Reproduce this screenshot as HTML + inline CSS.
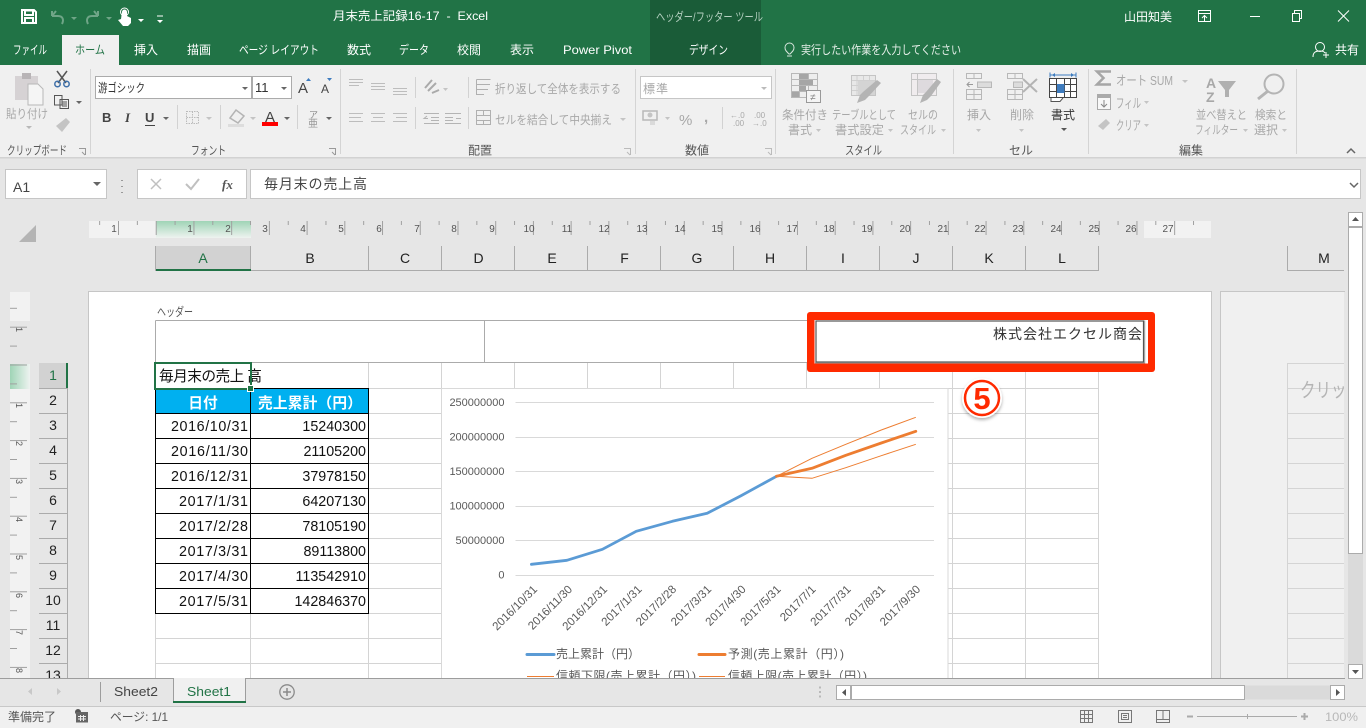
<!DOCTYPE html>
<html lang="ja"><head><meta charset="utf-8"><title>月末売上記録16-17 - Excel</title>
<style>
html,body{margin:0;padding:0;background:#e6e6e6;overflow:hidden}
svg{display:block}
text{font-family:"Liberation Sans","Noto Sans CJK JP",sans-serif;white-space:pre}
.w{fill:#fff;font-size:12px}
.g{fill:#a8a8a8;font-size:12px}
.d{fill:#444;font-size:12px}
.h{fill:#222;font-size:14px;text-anchor:middle}
.c{fill:#111;font-size:14.3px;text-anchor:end}
.r{fill:#555;font-size:10px;text-anchor:middle}
.y{fill:#595959;font-size:11px;text-anchor:end}
.x{fill:#595959;font-size:11.6px;text-anchor:end}
.l{fill:#595959;font-size:12px}
</style></head><body>
<svg width="1366" height="728" viewBox="0 0 1366 728" xmlns="http://www.w3.org/2000/svg">
<defs>
<pattern id="hr" x="118" y="221" width="37.72" height="17" patternUnits="userSpaceOnUse"><path d="M.5 0V14M19.36 0V4" stroke="#a0a0a0" fill="none"/></pattern>
<pattern id="vr" x="10" y="326.7" width="20" height="37.8" patternUnits="userSpaceOnUse"><path d="M0 .5H17M0 19.4H7" stroke="#a0a0a0" fill="none"/></pattern>
<linearGradient id="gh" x1="0" y1="0" x2="0" y2="1"><stop offset="0" stop-color="#9fd4b6"/><stop offset="1" stop-color="#eef3f0"/></linearGradient>
<linearGradient id="gv" x1="0" y1="0" x2="1" y2="0"><stop offset="0" stop-color="#9fd4b6"/><stop offset="1" stop-color="#eef3f0"/></linearGradient>
<filter id="sh" x="-30%" y="-30%" width="160%" height="160%"><feDropShadow dx="0" dy="2" stdDeviation="1.5" flood-color="#000" flood-opacity=".3"/></filter>
<clipPath id="cl"><rect x="0" y="200" width="1345" height="478"/></clipPath>
</defs>

<rect width="1366" height="728" fill="#e6e6e6"/>
<!-- title bar -->
<rect width="1366" height="65" fill="#217346"/>
<rect x="650" width="111" height="65" fill="#1a5c38"/>
<rect x="62" y="35" width="57" height="30" fill="#f0f0f0"/>
<!-- QAT -->
<path d="M22 10H34L36 12V23H22ZM25 10.5V15H33V10.5ZM25 23V18H33V23" fill="none" stroke="#fff" stroke-width="2"/>
<path d="M52 16L56 11M52 16H58C63 16 64 20 62 24M52 11V16" fill="none" stroke="#6fa587" stroke-width="2"/>
<path d="M72 19l3 3 3-3z M107 19l3 3 3-3z" fill="#6fa587" transform="translate(-1 -2)"/>
<path d="M98 16L94 11M98 16H92C87 16 86 20 88 24M98 11V16" fill="none" stroke="#6fa587" stroke-width="2"/>
<path d="M122 12a2.5 2.5 0 0 1 5 0V16L131 18V23L128 26H123L118 20L121 19Z" fill="#fff"/><circle cx="124.5" cy="12" r="4" fill="none" stroke="#fff"/>
<path d="M138 19h6l-3 3zM157 20h6l-3 3z" fill="#fff"/><path d="M157 16h6" stroke="#fff"/>
<text x="333" y="20" class="w" textLength="155" lengthAdjust="spacingAndGlyphs">月末売上記録16-17  -  Excel</text>
<text x="656" y="21" class="w" style="fill:#b4d0c0" textLength="107" lengthAdjust="spacingAndGlyphs">ヘッダー/フッター ツール</text>
<text x="1124" y="21" class="w" textLength="48" lengthAdjust="spacingAndGlyphs">山田知美</text>
<path d="M1198.5 10.5H1210.5V21.5H1198.5ZM1198.5 13.5H1210.5M1202 18L1204.5 15.5L1207 18M1204.5 16V21" fill="none" stroke="#fff"/>
<path d="M1250 16.5H1260" stroke="#fff"/>
<path d="M1292.5 13.5H1299.5V21.5H1292.5ZM1294.5 13V10.5H1301.5V18.5H1300" fill="none" stroke="#fff"/>
<path d="M1338 10.5L1349 21.5M1349 10.5L1338 21.5" stroke="#fff" fill="none"/>
<!-- tabs -->
<text x="13" y="54" class="w" textLength="34" lengthAdjust="spacingAndGlyphs">ファイル</text>
<text x="75" y="54" class="w" style="fill:#217346" textLength="30" lengthAdjust="spacingAndGlyphs">ホーム</text>
<text x="134" y="54" class="w" textLength="24">挿入</text>
<text x="187" y="54" class="w" textLength="24">描画</text>
<text x="239" y="54" class="w" textLength="80" lengthAdjust="spacingAndGlyphs">ページ レイアウト</text>
<text x="347" y="54" class="w" textLength="24">数式</text>
<text x="399" y="54" class="w" textLength="30" lengthAdjust="spacingAndGlyphs">データ</text>
<text x="457" y="54" class="w" textLength="24">校閲</text>
<text x="510" y="54" class="w" textLength="24">表示</text>
<text x="563" y="54" class="w" textLength="69" lengthAdjust="spacingAndGlyphs">Power Pivot</text>
<text x="689" y="54" class="w" textLength="39" lengthAdjust="spacingAndGlyphs">デザイン</text>
<path d="M789 54c-3-3-4-4-4-6.500a4.500 4.500 0 0 1 9 0c0 2.500-1 3.500-4 6.500zM787 56h5" fill="none" stroke="#d8e6dd"/>
<text x="801" y="54" class="w" style="fill:#e6efe9" textLength="160" lengthAdjust="spacingAndGlyphs">実行したい作業を入力してください</text>
<circle cx="1320" cy="47" r="4.500" fill="none" stroke="#fff"/><path d="M1313 57c0-5 3-6 7-6s4 1 5 2M1323 55h6M1326 52v6" fill="none" stroke="#fff"/>
<text x="1335" y="54" class="w" textLength="24">共有</text>

<!-- ribbon -->
<rect y="65" width="1366" height="93" fill="#f0f0f0"/>
<rect y="157" width="1366" height="1.500" fill="#d2d2d2"/>
<path d="M90.500 69V154M340.500 69V154M635.500 69V154M775.500 69V154M953.500 69V154M1088.500 69V154M1296.500 69V154" stroke="#d4d4d4"/>
<!-- clipboard -->
<path d="M15 76H38V100H15Z" fill="#d6d2d4"/><path d="M22 73H31V79H22Z" fill="#b8b4b6"/>
<path d="M28 84H38L43 89V105H28Z" fill="#f5f5f5" stroke="#b8b8b8"/>
<text x="6" y="118" class="g" textLength="42" lengthAdjust="spacingAndGlyphs">貼り付け</text>
<path d="M26 126h6l-3 3z" fill="#b8b8b8"/>
<path d="M57 71L66 83M67 71L58 83" stroke="#555" stroke-width="1.500"/><circle cx="57.500" cy="84" r="2.700" fill="none" stroke="#3e6fa8" stroke-width="1.500"/><circle cx="66.500" cy="84" r="2.700" fill="none" stroke="#3e6fa8" stroke-width="1.500"/>
<path d="M54.500 95.500H62V105H54.500ZM60 99.500H68.500V108.500H60ZM62 102H67M62 104H67M62 106H67" fill="#f0f0f0" stroke="#555"/>
<path d="M76 101h6l-3 3z" fill="#666"/>
<path d="M56 126L66 118L70 122L62 132Z" fill="#c4c4c4"/>
<text x="7" y="154.500" class="d" style="fill:#555" textLength="60" lengthAdjust="spacingAndGlyphs">クリップボード</text>
<path d="M79 148.500H85.500V155M82 152l3 3" fill="none" stroke="#999"/>
<!-- font -->
<rect x="95.500" y="76.500" width="156" height="22" fill="#fff" stroke="#ababab"/>
<rect x="252.500" y="76.500" width="39" height="22" fill="#fff" stroke="#ababab"/>
<text x="98" y="92" class="d" style="fill:#333" textLength="47" lengthAdjust="spacingAndGlyphs">游ゴシック</text>
<text x="255" y="92" class="d" style="fill:#333;font-size:13px">11</text>
<path d="M242 87h6l-3 3zM281 87h6l-3 3z" fill="#666"/>
<text x="298" y="93" class="d" style="font-size:15px">A</text><path d="M306 81l2.500-3 2.500 3z" fill="#3e7cbf"/>
<text x="321" y="93" class="d" style="font-size:12px">A</text><path d="M327 78l2.500 3 2.500-3z" fill="#3e7cbf"/>
<text x="102" y="122" class="d" style="font-size:13px;font-weight:bold">B</text>
<text x="125" y="122" class="d" style="font-size:13px;font-style:italic;font-family:'Liberation Serif',serif;font-weight:bold">I</text>
<text x="145" y="122" class="d" style="font-size:13px;font-weight:bold">U</text><path d="M145 125.500h10" stroke="#444"/>
<path d="M163 117h6l-3 3z" fill="#666"/>
<path d="M177.500 105V129M220.500 105V129M297.500 105V129" stroke="#d2d2d2"/>
<path d="M186.500 111.500H198.500V123.500H186.500ZM192.500 111.500V123.500M186.500 117.500H198.500" fill="none" stroke="#bbb" stroke-dasharray="1.500 1"/>
<path d="M206 117h6l-3 3z" fill="#c4c4c4"/>
<path d="M230 118L236 110L244 116L238 123Z" fill="none" stroke="#b4b4b4" stroke-width="1.500"/><rect x="228" y="124" width="16" height="3" fill="#ddd"/>
<path d="M250 117h6l-3 3z" fill="#c4c4c4"/>
<text x="265" y="122" class="d" style="font-size:15px">A</text><rect x="262" y="122" width="16" height="4" fill="#f00"/>
<path d="M284 117h6l-3 3z" fill="#666"/>
<text x="309" y="118" class="g" style="font-size:9px;fill:#888">ア</text><text x="308" y="127" class="g" style="font-size:10px;fill:#999">亜</text>
<path d="M326 117h6l-3 3z" fill="#666"/>
<text x="191" y="154.500" class="d" style="fill:#555" textLength="35" lengthAdjust="spacingAndGlyphs">フォント</text>
<path d="M329 148.500H335.500V155M332 152l3 3" fill="none" stroke="#999"/>
<!-- alignment -->
<path d="M349 79.500H363M349 82.500H363M349 85.500H359 M371 83.500H385M371 86.500H385M371 89.500H385 M393 88.500H407M393 91.500H407M393 94.500H407 M349 113.500H363M349 117.500H361M349 121.500H363 M371 113.500H385M373 117.500H383M371 121.500H385 M393 113.500H407M396 117.500H407M393 121.500H407" stroke="#bdbdbd" fill="none"/>
<path d="M415.500 77V98M415.500 107V129M468.500 77V98M468.500 107V129" stroke="#d2d2d2"/>
<path d="M425 88L432 80M428 91L436 83M432 93l7-3" stroke="#aaa" stroke-width="2" fill="none"/><path d="M443 88h5l-2.500 3z" fill="#c4c4c4"/>
<path d="M424 113.500H439M431 117.500H439M431 120.500H439M424 123.500H439M428 118.500L424 118.500L427 116M445 113.500H461M445 117.500H453M445 120.500H453M445 123.500H461M456 118.500h5" stroke="#b4b4b4" fill="none"/>
<path d="M476.500 79.500H490.500M476.500 79.500V94.500H484M476.500 84.500H490M476.500 89.500H488" stroke="#b0b0b0" fill="none"/>
<text x="495" y="93" class="g" textLength="126" lengthAdjust="spacingAndGlyphs">折り返して全体を表示する</text>
<path d="M476.500 110.500H490.500V124.500H476.500ZM476.500 115.500H490.500M476.500 120.500H490.500M483.500 110.500V115.500M483.500 120.500V124.500" stroke="#b0b0b0" fill="none"/>
<text x="495" y="124" class="g" textLength="117" lengthAdjust="spacingAndGlyphs">セルを結合して中央揃え</text>
<path d="M620 118h6l-3 3z" fill="#c4c4c4"/>
<text x="468" y="154.500" class="d" style="fill:#555" textLength="24">配置</text>
<path d="M624 148.500H630.500V155M627 152l3 3" fill="none" stroke="#bbb"/>
<!-- number -->
<rect x="640.500" y="76.500" width="131" height="22" fill="#fff" stroke="#c6c6c6"/>
<text x="643" y="93" class="g" textLength="25">標準</text>
<path d="M761 87h6l-3 3z" fill="#bbb"/>
<path d="M643 111H657V120H643Z" fill="none" stroke="#b8b8b8" stroke-width="1.500"/><circle cx="650" cy="115" r="2.500" fill="#c4c4c4"/><path d="M650 122h5M650 124h5" stroke="#c4c4c4"/>
<path d="M665 117h5l-2.500 3z" fill="#c4c4c4"/>
<text x="679" y="125" class="g" style="font-size:15px">%</text>
<text x="704" y="122" class="g" style="font-size:15px;font-weight:bold">,</text>
<path d="M722.500 107V129" stroke="#d2d2d2"/>
<text x="730" y="118" class="g" style="font-size:8px">←.0</text><text x="733" y="126" class="g" style="font-size:8px">.00</text>
<text x="754" y="118" class="g" style="font-size:8px">.00</text><text x="752" y="126" class="g" style="font-size:8px">→.0</text>
<text x="685" y="154.500" class="d" style="fill:#555" textLength="24">数値</text>
<path d="M765 148.500H771.500V155M768 152l3 3" fill="none" stroke="#bbb"/>
<!-- styles -->
<path d="M791.500 73.500H817.500V97.500H791.500ZM791.500 79.500H817.500M791.500 85.500H817.500M791.500 91.500H817.500M799.500 73.500V97.500M808.500 73.500V97.500" fill="#eee" stroke="#b8b8b8"/>
<path d="M799 74H808V79H799ZM799 80H813V85H799ZM799 86H806V91H799ZM792 92H799V97H792Z" fill="#a6a6a6"/>
<rect x="806.500" y="90.500" width="14" height="12" fill="#f5f5f5" stroke="#999"/><text x="810" y="100.500" class="g" style="font-size:10px;fill:#888">≠</text>
<text x="782" y="119" class="g" textLength="46" lengthAdjust="spacingAndGlyphs">条件付き</text>
<text x="788" y="134" class="g" textLength="24">書式</text><path d="M816 129h5l-2.500 3z" fill="#c4c4c4"/>
<path d="M851.500 75.500H875.500V95.500H851.500Z" fill="#e8e8e8" stroke="#c4c4c4"/><path d="M857 76V95M863.500 76V95M869.500 76V95M852 80.500H875M852 85.500H875M852 90.500H875" stroke="#d0d0d0"/><rect x="858" y="81" width="17" height="14" fill="#d4d4d4"/>
<path d="M857 103L860 95L863 92L877 80L881 83L868 97L865 100Z" fill="#b4b4b4"/>
<text x="832" y="119" class="g" textLength="64" lengthAdjust="spacingAndGlyphs">テーブルとして</text>
<text x="835" y="134" class="g" textLength="49" lengthAdjust="spacingAndGlyphs">書式設定</text><path d="M888 129h5l-2.500 3z" fill="#c4c4c4"/>
<path d="M911.500 73.500H936.500V95.500H911.500ZM911.500 79.500H936.500M917.500 74V95" fill="#f0ecee" stroke="#c4c4c4"/><rect x="918" y="80" width="15" height="13" fill="#dedade"/>
<path d="M920 103L923 95L926 92L937 79L941 82L931 96L927 100Z" fill="#b4b4b4"/>
<text x="908" y="119" class="g" textLength="30" lengthAdjust="spacingAndGlyphs">セルの</text>
<text x="900" y="134" class="g" textLength="36" lengthAdjust="spacingAndGlyphs">スタイル</text><path d="M941 129h5l-2.500 3z" fill="#c4c4c4"/>
<text x="845" y="154.500" class="d" style="fill:#555" textLength="37" lengthAdjust="spacingAndGlyphs">スタイル</text>
<!-- cells -->
<path d="M966.500 73.500H981.500V78.500H966.500ZM974 73.500V78.500M966.500 89.500H981.500V99.500H966.500ZM966.500 94.500H981.500M974 89.500V99.500" fill="none" stroke="#b8b8b8"/><rect x="977.500" y="82" width="14" height="5.500" fill="#dcdcdc" stroke="#b8b8b8"/>
<path d="M973 84.500H967M969.500 82L967 84.500L969.500 87" fill="none" stroke="#999"/>
<text x="967" y="119" class="g" textLength="24">挿入</text><path d="M976 129h5l-2.500 3z" fill="#c4c4c4"/>
<path d="M1007.500 73.500H1022.500V78.500H1007.500ZM1015 73.500V78.500M1007.500 89.500H1022.500V99.500H1007.500ZM1007.500 94.500H1022.500M1015 89.500V99.500" fill="none" stroke="#b8b8b8"/><rect x="1013.500" y="82" width="9" height="5.500" fill="#dcdcdc" stroke="#b8b8b8"/>
<path d="M1023 79L1037 92M1037 79L1023 92" stroke="#b4b4b4" stroke-width="2"/>
<text x="1010" y="119" class="g" textLength="24">削除</text><path d="M1019 129h5l-2.500 3z" fill="#c4c4c4"/>
<path d="M1050 75H1076M1050 72.500V77.500M1076 72.500V77.500" stroke="#3e7cbf" fill="none"/><path d="M1052 75l3-2v4zM1074 75l-3-2v4z" fill="#3e7cbf"/>
<path d="M1049.500 78.500H1076.500V97.500H1049.500ZM1049.500 84.500H1076.500M1049.500 91.500H1076.500M1056.500 78.500V97.500M1064.500 78.500V97.500M1070.500 78.500V97.500" fill="#fff" stroke="#444"/>
<path d="M1051 98L1051 101.500H1060L1063 98" fill="#fff" stroke="#555"/>
<rect x="1057" y="84" width="7.500" height="9" fill="#3e7cbf"/>
<text x="1051" y="119" class="d" style="fill:#333" textLength="24">書式</text><path d="M1061 128h6l-3 3z" fill="#555"/>
<text x="1009" y="154.500" class="d" style="fill:#555" textLength="24">セル</text>
<!-- editing -->
<path d="M1111 71.500H1097L1103.500 78L1097 84.500H1111" fill="none" stroke="#a6a6a6" stroke-width="2.500"/>
<text x="1116" y="85" class="g" style="font-size:13px" textLength="57" lengthAdjust="spacingAndGlyphs">オート SUM</text><path d="M1182 80h6l-3 3z" fill="#c4c4c4"/>
<rect x="1097.500" y="94.500" width="13" height="15" fill="#f8f8f8" stroke="#aaa"/><rect x="1097" y="94" width="14" height="4" fill="#aaa"/><path d="M1104 100V107M1101 104L1104 107L1107 104" stroke="#888" fill="none"/>
<text x="1116" y="108" class="g" style="font-size:13px" textLength="25" lengthAdjust="spacingAndGlyphs">フィル</text><path d="M1144 101h5l-2.500 3z" fill="#c4c4c4"/>
<path d="M1098 126L1106 119L1110 123L1103 130Z" fill="#c4c4c4"/>
<text x="1116" y="130" class="g" style="font-size:13px" textLength="25" lengthAdjust="spacingAndGlyphs">クリア</text><path d="M1144 124h5l-2.500 3z" fill="#c4c4c4"/>
<text x="1206" y="88" class="g" style="font-size:14px;font-weight:bold">A</text><text x="1206" y="102" class="g" style="font-size:14px;font-weight:bold">Z</text>
<path d="M1218 81H1236L1229 90V97H1225V90Z" fill="#b0b0b0"/>
<circle cx="1274" cy="84" r="9.500" fill="none" stroke="#b4b4b4" stroke-width="2"/><path d="M1268 91L1258 99" stroke="#b4b4b4" stroke-width="3"/>
<text x="1196" y="119" class="g" textLength="51" lengthAdjust="spacingAndGlyphs">並べ替えと</text>
<text x="1195" y="134" class="g" textLength="43" lengthAdjust="spacingAndGlyphs">フィルター</text><path d="M1243 129h5l-2.500 3z" fill="#c4c4c4"/>
<text x="1255" y="119" class="g" textLength="32" lengthAdjust="spacingAndGlyphs">検索と</text>
<text x="1254" y="134" class="g" textLength="24">選択</text><path d="M1282 129h5l-2.500 3z" fill="#c4c4c4"/>
<text x="1179" y="154.500" class="d" style="fill:#555" textLength="24">編集</text>
<path d="M1347 153L1351 149L1355 153" fill="none" stroke="#666" stroke-width="1.500"/>

<!-- formula bar -->
<rect y="158.500" width="1366" height="41" fill="#e6e6e6"/>
<rect x="5.500" y="169.500" width="101" height="29" fill="#fff" stroke="#c6c6c6"/>
<text x="13" y="192" class="d" style="font-size:14px">A1</text>
<path d="M93 182h8l-4 4z" fill="#666"/>
<path d="M122 180v1M122 186v1M122 192v1" stroke="#999" stroke-width="2"/>
<rect x="137.500" y="169.500" width="109" height="29" fill="#fff" stroke="#c6c6c6"/>
<path d="M151 179L161 189M161 179L151 189" stroke="#c0c0c0" stroke-width="1.500"/>
<path d="M186 184L191 189L199 179" fill="none" stroke="#c0c0c0" stroke-width="2"/>
<text x="222" y="189" style="font-size:13px;font-family:'Liberation Serif',serif;font-style:italic;font-weight:bold;fill:#555">fx</text>
<rect x="250.500" y="169.500" width="1110" height="29" fill="#fff" stroke="#c6c6c6"/>
<text x="264" y="189" class="d" style="font-size:14px" textLength="103">毎月末の売上高</text>
<path d="M1350 183L1354 187L1358 183" fill="none" stroke="#666" stroke-width="1.500"/>

<!-- corner -->
<path d="M19 242L36 225V242Z" fill="#b4b4b4"/>
<!-- h ruler -->
<rect x="89" y="221" width="67" height="17" fill="#f2f2f2"/>
<rect x="156" y="221" width="95" height="17" fill="url(#gh)"/>
<rect x="1144" y="221" width="67" height="17" fill="#f2f2f2"/>
<rect x="89" y="221" width="1122" height="17" fill="url(#hr)"/>
<g class="rr">
<text x="114" y="232" class="r">1</text><text x="190" y="232" class="r">1</text><text x="228" y="232" class="r">2</text><text x="265" y="232" class="r">3</text><text x="303" y="232" class="r">4</text><text x="341" y="232" class="r">5</text><text x="379" y="232" class="r">6</text><text x="417" y="232" class="r">7</text><text x="454" y="232" class="r">8</text><text x="492" y="232" class="r">9</text><text x="529" y="232" class="r">10</text><text x="567" y="232" class="r">11</text><text x="604" y="232" class="r">12</text><text x="642" y="232" class="r">13</text><text x="680" y="232" class="r">14</text><text x="717" y="232" class="r">15</text><text x="755" y="232" class="r">16</text><text x="792" y="232" class="r">17</text><text x="829" y="232" class="r">18</text><text x="867" y="232" class="r">19</text><text x="905" y="232" class="r">20</text><text x="943" y="232" class="r">21</text><text x="980" y="232" class="r">22</text><text x="1018" y="232" class="r">23</text><text x="1056" y="232" class="r">24</text><text x="1094" y="232" class="r">25</text><text x="1131" y="232" class="r">26</text><text x="1168" y="232" class="r">27</text>
</g>
<!-- col headers -->
<rect x="156" y="246" width="95" height="25" fill="#d2d2d2"/>
<path d="M155.500 246V271M250.500 246V271M368.500 246V271M441.500 246V271M514.500 246V271M587.500 246V271M660.500 246V271M733.500 246V271M806.500 246V271M879.500 246V271M952.500 246V271M1025.500 246V271M1098.500 246V271M155.500 270.500H1099M1287.500 246V271M1287.500 270.500H1344" stroke="#ababab" fill="none"/>
<rect x="156" y="269" width="95" height="2" fill="#217346"/>
<text x="203" y="263" class="h" style="fill:#217346">A</text><text x="310" y="263" class="h">B</text><text x="405" y="263" class="h">C</text><text x="478.500" y="263" class="h">D</text><text x="552" y="263" class="h">E</text><text x="624.500" y="263" class="h">F</text><text x="697" y="263" class="h">G</text><text x="770" y="263" class="h">H</text><text x="843" y="263" class="h">I</text><text x="916" y="263" class="h">J</text><text x="989" y="263" class="h">K</text><text x="1062" y="263" class="h">L</text><text x="1324" y="263" class="h">M</text>
<!-- v ruler -->
<rect x="10" y="292" width="20" height="29" fill="#f2f2f2"/>
<rect x="10" y="364" width="20" height="25" fill="url(#gv)"/>
<rect x="10" y="389" width="20" height="289" fill="#f2f2f2"/>
<rect x="10" y="292" width="20" height="386" fill="url(#vr)"/>
<g style="font-size:9px;fill:#555">
<text transform="translate(16,330) rotate(90) translate(-3,0)" style="font-size:9px;fill:#555">1</text><text transform="translate(16,403) rotate(90)" style="font-size:9px;fill:#555">1</text><text transform="translate(16,441) rotate(90)" style="font-size:9px;fill:#555">2</text><text transform="translate(16,479) rotate(90)" style="font-size:9px;fill:#555">3</text><text transform="translate(16,517) rotate(90)" style="font-size:9px;fill:#555">4</text><text transform="translate(16,555) rotate(90)" style="font-size:9px;fill:#555">5</text><text transform="translate(16,593) rotate(90)" style="font-size:9px;fill:#555">6</text><text transform="translate(16,630) rotate(90)" style="font-size:9px;fill:#555">7</text><text transform="translate(16,668) rotate(90)" style="font-size:9px;fill:#555">8</text>
</g>
<!-- page -->
<g clip-path="url(#cl)">
<rect x="88.500" y="291.500" width="1123" height="400" fill="#fff" stroke="#c6c6c6"/>
<rect x="1220.500" y="291.500" width="140" height="400" fill="#f0f0f0" stroke="#c6c6c6"/>
<text x="157" y="316" style="font-size:12px;fill:#555" textLength="36" lengthAdjust="spacingAndGlyphs">ヘッダー</text>
<!-- grid -->
<path d="M155.500 363V678M250.500 363V678M368.500 363V678M441.500 363V678M514.500 363V388M587.500 363V388M660.500 363V388M733.500 363V388M806.500 363V388M879.500 363V388M952.500 363V678M1025.500 363V678M1098.500 363V678M155.500 388.500H1099M155.500 413.500H1099M155.500 438.500H1099M155.500 463.500H1099M155.500 488.500H1099M155.500 513.500H1099M155.500 538.500H1099M155.500 563.500H1099M155.500 588.500H1099M155.500 613.500H1099M155.500 638.500H1099M155.500 663.500H1099" stroke="#d4d4d4" fill="none"/>
<path d="M1287.500 363V678M1287.500 363.500H1344M1287.500 388.500H1344M1287.500 413.500H1344M1287.500 438.500H1344M1287.500 463.500H1344M1287.500 488.500H1344M1287.500 513.500H1344M1287.500 538.500H1344M1287.500 563.500H1344M1287.500 588.500H1344M1287.500 613.500H1344M1287.500 638.500H1344M1287.500 663.500H1344" stroke="#d4d4d4" fill="none"/>
<text x="1300" y="397" style="font-size:20px;fill:#b4b4b4" textLength="62" lengthAdjust="spacingAndGlyphs">クリップ</text>
<rect x="1344" y="292" width="20" height="386" fill="#e6e6e6"/>
<!-- header boxes -->
<path d="M155.500 320.500H816M155.500 320.500V362.500H816M484.500 320.500V362.500" stroke="#ababab" fill="none"/>
<!-- table -->
<rect x="156" y="389" width="212" height="25" fill="#00b0f0"/>
<path d="M155.500 388.500H368.500V613.500H155.500ZM250.500 388.500V613.500M155.500 413.500H368.500M155.500 438.500H368.500M155.500 463.500H368.500M155.500 488.500H368.500M155.500 513.500H368.500M155.500 538.500H368.500M155.500 563.500H368.500M155.500 588.500H368.500" stroke="#000" fill="none"/>
<text x="159" y="381" style="font-size:14.700px;fill:#111" textLength="103">毎月末の売上 高</text>
<text x="203" y="408" style="font-size:14.700px;font-weight:bold;fill:#fff;text-anchor:middle">日付</text>
<text x="258" y="408" style="font-size:14.700px;font-weight:bold;fill:#fff" textLength="104">売上累計（円）</text>
<g>
<text x="248" y="431" class="c" textLength="77">2016/10/31</text><text x="366" y="431" class="c">15240300</text>
<text x="248" y="456" class="c" textLength="77">2016/11/30</text><text x="366" y="456" class="c">21105200</text>
<text x="248" y="481" class="c" textLength="77">2016/12/31</text><text x="366" y="481" class="c">37978150</text>
<text x="248" y="506" class="c" textLength="69">2017/1/31</text><text x="366" y="506" class="c">64207130</text>
<text x="248" y="531" class="c" textLength="69">2017/2/28</text><text x="366" y="531" class="c">78105190</text>
<text x="248" y="556" class="c" textLength="69">2017/3/31</text><text x="366" y="556" class="c">89113800</text>
<text x="248" y="581" class="c" textLength="69">2017/4/30</text><text x="366" y="581" class="c">113542910</text>
<text x="248" y="606" class="c" textLength="69">2017/5/31</text><text x="366" y="606" class="c">142846370</text>
</g>
<rect x="155" y="363" width="96" height="26" fill="none" stroke="#217346" stroke-width="2"/>
<rect x="247.500" y="385.500" width="6" height="6" fill="#217346" stroke="#fff"/>
<!-- chart -->
<rect x="441.500" y="388.500" width="506.500" height="300" fill="#fff" stroke="#d9d9d9"/>
<path d="M515.500 402.500H934M515.500 437.500H934M515.500 471.500H934M515.500 506.500H934M515.500 540.500H934M515.500 575.500H934" stroke="#d9d9d9" fill="none"/>
<text x="504.500" y="406" class="y">250000000</text><text x="504.500" y="440.500" class="y">200000000</text><text x="504.500" y="475" class="y">150000000</text><text x="504.500" y="509.500" class="y">100000000</text><text x="504.500" y="544" class="y">50000000</text><text x="504.500" y="578.500" class="y">0</text>
<polyline points="531.400,564.300 566.900,560.300 602.400,549.300 636.200,531.300 672.400,521.300 707.200,513.300 741,495.700 776.500,476.300" fill="none" stroke="#5b9bd5" stroke-width="2.800" stroke-linecap="round" stroke-linejoin="round"/>
<polyline points="776.500,476.300 812,468.300 845.800,455.300 881.300,443 915.800,431.300" fill="none" stroke="#ed7d31" stroke-width="2.800" stroke-linecap="round" stroke-linejoin="round"/>
<polyline points="776.500,476.300 812,458.300 845.800,444.300 881.300,430 915.800,417.300" fill="none" stroke="#ed7d31" stroke-width="1"/>
<polyline points="776.500,476.300 812,478.300 845.800,467.700 881.300,455.700 915.800,444.300" fill="none" stroke="#ed7d31" stroke-width="1"/>
<text transform="translate(538,590) rotate(-45)" class="x">2016/10/31</text>
<text transform="translate(573,590) rotate(-45)" class="x">2016/11/30</text>
<text transform="translate(608,590) rotate(-45)" class="x">2016/12/31</text>
<text transform="translate(642.500,590) rotate(-45)" class="x">2017/1/31</text>
<text transform="translate(677,590) rotate(-45)" class="x">2017/2/28</text>
<text transform="translate(712,590) rotate(-45)" class="x">2017/3/31</text>
<text transform="translate(746.500,590) rotate(-45)" class="x">2017/4/30</text>
<text transform="translate(781.500,590) rotate(-45)" class="x">2017/5/31</text>
<text transform="translate(816.500,590) rotate(-45)" class="x">2017/7/1</text>
<text transform="translate(851.500,590) rotate(-45)" class="x">2017/7/31</text>
<text transform="translate(886,590) rotate(-45)" class="x">2017/8/31</text>
<text transform="translate(921,590) rotate(-45)" class="x">2017/9/30</text>
<path d="M527 654.500H554" stroke="#5b9bd5" stroke-width="3" stroke-linecap="round"/>
<text x="556" y="658" class="l">売上累計（円）</text>
<path d="M699 654.500H725" stroke="#ed7d31" stroke-width="3" stroke-linecap="round"/>
<text x="728" y="658" class="l" textLength="116">予測(売上累計（円）)</text>
<path d="M527 676.500H554M699 676.500H725" stroke="#ed7d31"/>
<text x="556" y="680" class="l" textLength="140">信頼下限(売上累計（円）)</text>
<text x="728" y="680" class="l" textLength="139">信頼上限(売上累計（円）)</text>
</g>
<!-- red box -->
<rect x="807" y="312" width="348" height="60" rx="3" fill="#ff2a00"/>
<rect x="814.500" y="320" width="333.500" height="43.500" fill="#fff"/>
<rect x="816" y="321" width="327.500" height="41" fill="#fff" stroke="#555" stroke-width="1.200"/>
<path d="M1144.700 320.500V363H815" fill="none" stroke="#999"/>
<text x="993" y="339" style="font-size:14px;fill:#333" textLength="149">株式会社エクセル商会</text>
<!-- circled 5 -->
<g filter="url(#sh)"><circle cx="982" cy="398" r="20" fill="#fff"/></g>
<circle cx="982" cy="398" r="17" fill="#fff" stroke="#ff2a00" stroke-width="2.500"/>
<text x="982" y="409" style="font-size:31px;font-weight:bold;fill:#ff2a00;text-anchor:middle">5</text>
<!-- row headers -->
<rect x="39" y="363" width="29" height="25" fill="#d2d2d2"/>
<rect x="66" y="363" width="2" height="25" fill="#217346"/>
<path d="M67.500 388V678M39 388.500H67M39 413.500H67M39 438.500H67M39 463.500H67M39 488.500H67M39 513.500H67M39 538.500H67M39 563.500H67M39 588.500H67M39 613.500H67M39 638.500H67M39 663.500H67" stroke="#ababab" fill="none"/>
<g style="font-size:14px">
<text x="53" y="380" class="h" style="fill:#217346">1</text><text x="53" y="405" class="h">2</text><text x="53" y="430" class="h">3</text><text x="53" y="455" class="h">4</text><text x="53" y="480" class="h">5</text><text x="53" y="505" class="h">6</text><text x="53" y="530" class="h">7</text><text x="53" y="555" class="h">8</text><text x="53" y="580" class="h">9</text><text x="53" y="605" class="h">10</text><text x="53" y="630" class="h">11</text><text x="53" y="655" class="h">12</text><text x="53" y="680" class="h">13</text>
</g>
<!-- tabs bar -->
<rect y="678" width="1366" height="28" fill="#e6e6e6"/>
<path d="M0 678.500H1345" stroke="#9d9d9d"/>
<path d="M100.500 682V702" stroke="#9d9d9d"/>
<path d="M32 688v7l-4-3.500zM57 688v7l4-3.500z" fill="#c8c8c8"/>
<text x="114" y="696" style="font-size:13px;fill:#444" textLength="44" lengthAdjust="spacingAndGlyphs">Sheet2</text>
<rect x="173.500" y="678.500" width="72" height="23" fill="#f0f0f0" stroke="#9d9d9d"/>
<rect x="173" y="701" width="73" height="2" fill="#217346"/>
<rect x="174" y="678" width="71" height="1.500" fill="#f0f0f0"/>
<text x="187" y="696" style="font-size:13px;fill:#217346" textLength="44" lengthAdjust="spacingAndGlyphs">Sheet1</text>
<circle cx="287" cy="692" r="7.200" fill="none" stroke="#8a8a8a" stroke-width="1.300"/><path d="M283 692H291M287 688V696" stroke="#8a8a8a" stroke-width="1.500"/>
<path d="M820 686.500v2M820 691v2M820 695.500v2" stroke="#aaa" stroke-width="1.500"/>
<!-- h scrollbar -->
<rect x="836.500" y="685.500" width="508" height="14" fill="#dadada"/>
<rect x="836.500" y="685.500" width="14" height="14" fill="#fff" stroke="#ababab"/>
<rect x="851.500" y="685.500" width="393" height="14" fill="#fff" stroke="#ababab"/>
<rect x="1330.500" y="685.500" width="14" height="14" fill="#fff" stroke="#ababab"/>
<path d="M846 689v7l-4-3.500zM1336 689v7l4-3.500z" fill="#555"/>
<!-- v scrollbar -->
<rect x="1348" y="212" width="15" height="466" fill="#dadada"/>
<rect x="1348.500" y="212.500" width="14" height="14" fill="#fff" stroke="#ababab"/>
<rect x="1348.500" y="227.500" width="14" height="326" fill="#fff" stroke="#ababab"/>
<rect x="1348.500" y="664.500" width="14" height="14" fill="#fff" stroke="#ababab"/>
<path d="M1352 221h7l-3.500-4zM1352 670h7l-3.500 4z" fill="#555"/>
<!-- status bar -->
<rect y="706" width="1366" height="22" fill="#f0f0f0"/>
<path d="M0 706.500H1366" stroke="#c8c8c8"/>
<text x="8" y="721" style="font-size:12px;fill:#555" textLength="48" lengthAdjust="spacingAndGlyphs">準備完了</text>
<circle cx="78" cy="712" r="3" fill="#555"/><path d="M76 712H88V722.500H76Z" fill="#666"/><path d="M78 716.500H86M78 719H86M80.500 715V721M83.500 715V721" stroke="#eee"/>
<text x="110" y="721" style="font-size:12px;fill:#555" textLength="58" lengthAdjust="spacingAndGlyphs">ページ: 1/1</text>
<path d="M1080.500 710.500H1092.500V722.500H1080.500ZM1084.500 710.500V722.500M1088.500 710.500V722.500M1080.500 714.500H1092.500M1080.500 718.500H1092.500" fill="none" stroke="#777"/>
<path d="M1118.500 710.500H1131.500V722.500H1118.500ZM1121.500 713.500H1128.500V719.500H1121.500ZM1123 715.500H1127M1123 717.500H1127" fill="none" stroke="#777"/>
<path d="M1156.500 710.500H1169.500V722.500H1156.500ZM1156.500 719.500H1169.500M1163 710.500V719.500" fill="none" stroke="#777"/>
<path d="M1187 716.500H1193M1301 716.500H1308M1304.500 713V720" stroke="#aaa" stroke-width="2"/>
<path d="M1197 716.500H1297M1247.500 714V719" stroke="#aaa"/>
<text x="1325" y="721" style="font-size:12px;fill:#b8b8b8" textLength="33" lengthAdjust="spacingAndGlyphs">100%</text>
</svg>
</body></html>
